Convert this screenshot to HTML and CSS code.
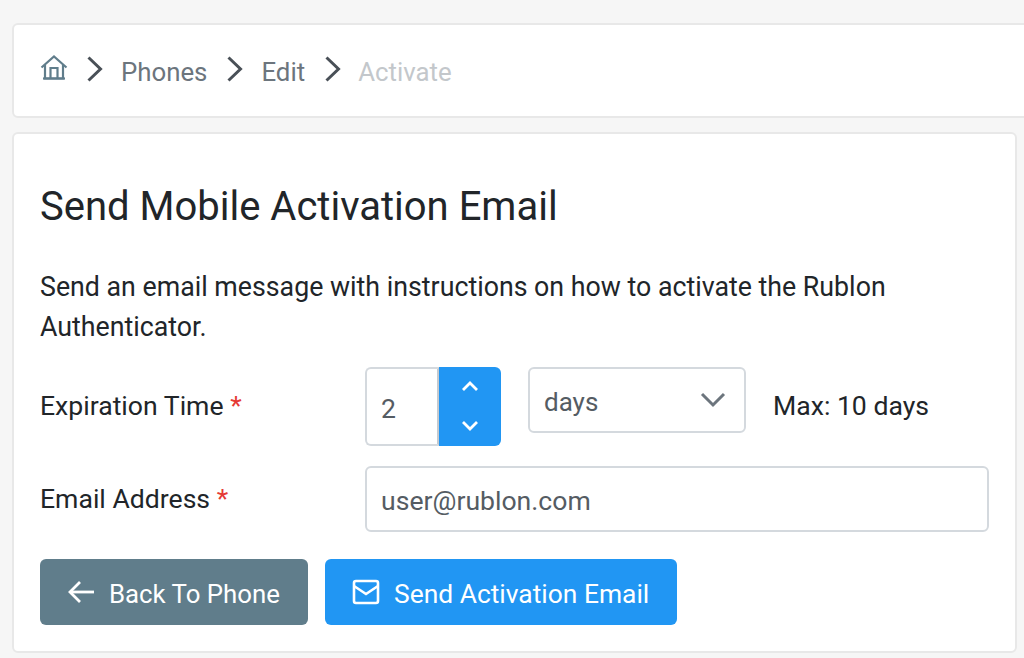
FILE: index.html
```html
<!DOCTYPE html>
<html lang="en">
<head>
  <meta charset="UTF-8" />
  <title>Send Mobile Activation Email</title>
  <link rel="stylesheet" href="styles.css">
</head>
<body>
  <nav class="crumbs">
    <a href="#" class="crumb-home" aria-label="Home">
      <svg width="28" height="28" viewBox="0 0 28 28" fill="none" stroke="#607d8b" stroke-width="2.200">
        <path d="M1.500 13.500 14 2.500l12.500 11"/>
        <path d="M5 11v13.500h18V11"/>
        <path d="M10.500 24.500V14h7v10.500"/>
        <path d="M3 24.500h22"/>
      </svg>
    </a>
    <svg class="sep" width="18" height="26" viewBox="0 0 18 26" fill="none"><path d="M2.500 1.500 14.500 13 2.500 24.500"/></svg>
    <a href="#" class="crumb-link">Phones</a>
    <svg class="sep" width="18" height="26" viewBox="0 0 18 26" fill="none"><path d="M2.500 1.500 14.500 13 2.500 24.500"/></svg>
    <a href="#" class="crumb-link">Edit</a>
    <svg class="sep" width="18" height="26" viewBox="0 0 18 26" fill="none"><path d="M2.500 1.500 14.500 13 2.500 24.500"/></svg>
    <span class="crumb-current">Activate</span>
  </nav>

  <main class="card">
    <h1>Send Mobile Activation Email</h1>
    <p class="intro">Send an email message with instructions on how to activate the Rublon Authenticator.</p>

    <div class="form-row row-expire">
      <label>Expiration Time <span class="req">*</span></label>
      <div class="expire-controls">
        <div class="spinner">
          <div class="spinner-value">2</div>
          <div class="spinner-btns">
            <svg width="18" height="12" viewBox="0 0 18 12" fill="none" stroke="#fff" stroke-width="2.800"><path d="M2 10l7-7 7 7"/></svg>
            <svg width="18" height="12" viewBox="0 0 18 12" fill="none" stroke="#fff" stroke-width="2.800"><path d="M2 2l7 7 7-7"/></svg>
          </div>
        </div>
        <div class="select">
          <span>days</span>
          <svg width="26" height="16" viewBox="0 0 26 16" fill="none" stroke="#6c757d" stroke-width="3"><path d="M2 2l11 11L24 2"/></svg>
        </div>
        <span class="max">Max: 10 days</span>
      </div>
    </div>

    <div class="form-row row-email">
      <label>Email Address <span class="req">*</span></label>
      <div class="input">user@rublon.com</div>
    </div>

    <div class="actions">
      <a href="#" class="btn btn-back">
        <svg width="30" height="26" viewBox="0 0 30 26" fill="none" stroke="#fff" stroke-width="2.800"><path d="M27 13H3"/><path d="M13 3 3 13l10 10"/></svg>
        <span>Back To Phone</span>
      </a>
      <a href="#" class="btn btn-send">
        <svg width="28" height="26" viewBox="0 0 28 26" fill="none" stroke="#fff" stroke-width="2.600"><rect x="2" y="2" width="24" height="22" rx="2"/><path d="M2 7l12 8 12-8"/></svg>
        <span>Send Activation Email</span>
      </a>
    </div>
  </main>
</body>
</html>
```
FILE: styles.css
```css
* {
  margin: 0;
  padding: 0;
  box-sizing: border-box;
}
html, body {
  height: 658px;
  overflow: hidden;
}
body {
  background: #f6f6f6;
  color: #212529;
  font-family: Roboto, sans-serif;
  font-size: 26.6px;
  padding: 23px 7px 0 12px;
}
a {
  color: inherit;
  text-decoration: none;
}
.crumbs {
  height: 95px;
  margin-right: -30px;
  display: flex;
  align-items: center;
  background: #fff;
  border: 2px solid #e8e8e8;
  border-radius: 6px;
  margin-bottom: 14px;
  padding: 0 26px;
  color: #6c757d;
  font-size: 25.800px;
}
.crumb-home {
  display: flex;
  margin-right: 18px;
  margin-top: -6px;
}
.sep {
  stroke: #495057;
  stroke-width: 3;
  margin-top: -3px;
}
.crumb-link {
  margin: 2px 19px 0 17px;
}
.crumb-current {
  color: #c3c7cb;
  margin: 2px 0 0 16px;
}
.card {
  height: 521px;
  background: #fff;
  border: 2px solid #e8e8e8;
  border-radius: 6px;
  padding: 48px 26px 0;
}
h1 {
  font-size: 40px;
  font-weight: 400;
  line-height: 50px;
  margin-bottom: 35px;
}
.intro {
  font-size: 26.750px;
  line-height: 40px;
  margin-bottom: 20px;
  max-width: 900px;
}
.form-row {
  display: flex;
}
.form-row label {
  width: 325px;
  flex: none;
}
.req {
  color: #e53935;
}
.row-expire {
  height: 79px;
  margin-bottom: 20px;
}
.row-expire label {
  line-height: 78px;
}
.expire-controls {
  display: flex;
  gap: 27px;
  align-items: flex-start;
}
.spinner {
  width: 136px;
  height: 79px;
  display: flex;
}
.spinner-value {
  width: 74px;
  display: flex;
  align-items: center;
  padding: 4px 0 0 14px;
  color: #555c63;
  border: 2px solid #d4d9de;
  border-right-color: #c4cad0;
  border-radius: 6px 0 0 6px;
}
.spinner-btns {
  flex: 1;
  display: flex;
  flex-direction: column;
  align-items: center;
  justify-content: space-between;
  padding: 13px 0 14px;
  background: #2196f3;
  border-radius: 0 6px 6px 0;
}
.select {
  width: 218px;
  height: 66px;
  display: flex;
  align-items: center;
  justify-content: space-between;
  padding: 3px 18px 0 14px;
  color: #555c63;
  font-size: 26px;
  border: 2px solid #d4d9de;
  border-radius: 6px;
}
.select svg {
  margin-top: -3px;
}
.max {
  line-height: 78px;
}
.row-email {
  height: 66px;
  margin-bottom: 27px;
}
.row-email label {
  line-height: 66px;
}
.input {
  flex: 1;
  display: flex;
  align-items: center;
  padding: 2px 0 0 14px;
  color: #555c63;
  border: 2px solid #d4d9de;
  border-radius: 6px;
}
.actions {
  display: flex;
  gap: 17px;
}
.btn {
  height: 66px;
  display: flex;
  align-items: center;
  gap: 12px;
  color: #fff;
  border-radius: 6px;
}
.btn span {
  margin-top: 4px;
}
.btn-back {
  width: 268px;
  padding-left: 27px;
  background: #607d8b;
  font-size: 25.800px;
}
.btn-send {
  width: 352px;
  padding-left: 27px;
  background: #2196f3;
  font-size: 26.400px;
  gap: 14px;
}
.btn-send span {
  margin-top: 3px;
}
```
